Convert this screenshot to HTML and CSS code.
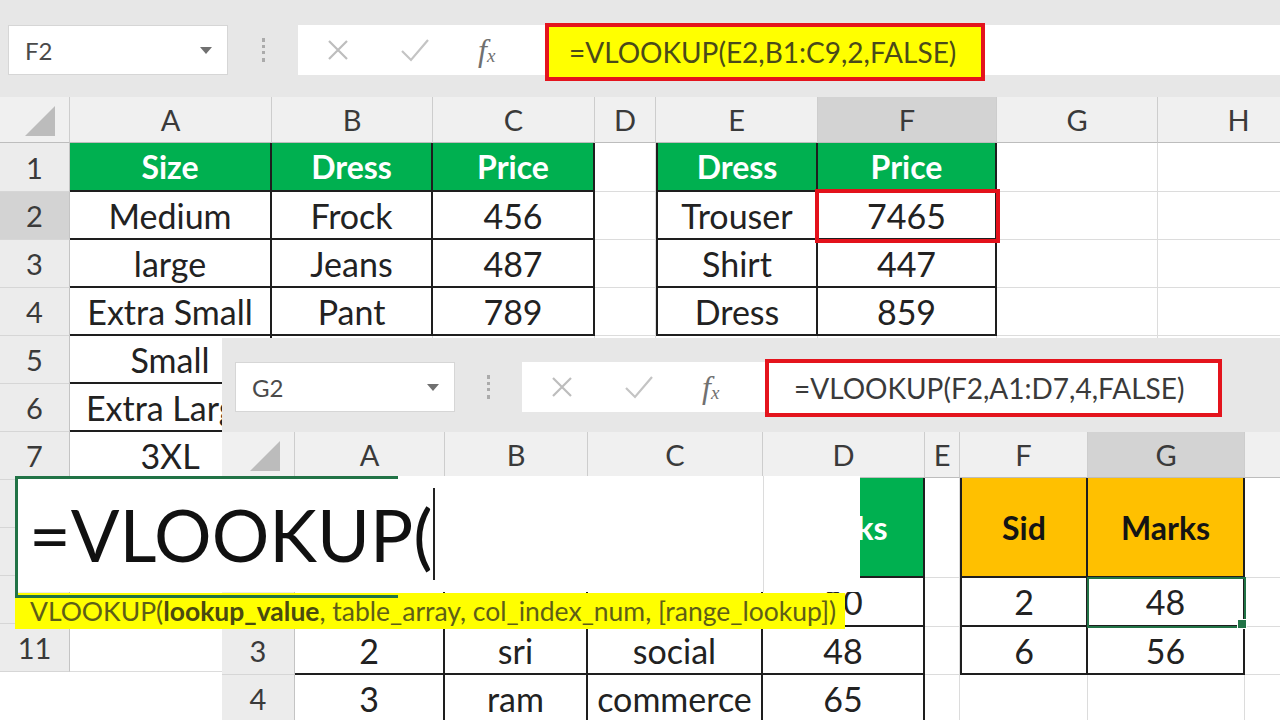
FILE: index.html
```html
<!DOCTYPE html>
<html lang="en">
<head>
    <meta charset="UTF-8">
    <meta name="viewport" content="width=device-width, initial-scale=1.0">
    <title>VLOOKUP</title>
    <link rel="stylesheet" href="styles.css">
</head>
<body>
    <!-- first workbook: size / dress / price lookup -->
    <section class="win win1">
        <div class="fbar fbar1">
            <div class="namebox">F2<span class="drop"></span></div>
            <div class="sep"><span class="dots"></span></div>
            <div class="fxicons">
                <svg class="ic-x" width="24" height="24" viewBox="0 0 24 24"><path d="M3 3L21 21M21 3L3 21" stroke="#bdbdbd" stroke-width="2.2" fill="none"/></svg>
                <svg class="ic-ok" width="30" height="26" viewBox="0 0 30 26"><path d="M2 14L11 23L28 3" stroke="#c4c4c4" stroke-width="2.2" fill="none"/></svg>
                <span class="fx">f<sub>x</sub></span>
            </div>
            <div class="ftext yellow">=VLOOKUP(E2,B1:C9,2,FALSE)</div>
            <div class="frest"></div>
        </div>
        <div class="sheet" id="sheet1"></div>
    </section>

    <!-- second workbook: student marks lookup -->
    <section class="win win2">
        <div class="fbar fbar2">
            <div class="namebox">G2<span class="drop"></span></div>
            <div class="sep"><span class="dots"></span></div>
            <div class="fxicons">
                <svg class="ic-x" width="24" height="24" viewBox="0 0 24 24"><path d="M3 3L21 21M21 3L3 21" stroke="#bdbdbd" stroke-width="2.2" fill="none"/></svg>
                <svg class="ic-ok" width="30" height="26" viewBox="0 0 30 26"><path d="M2 14L11 23L28 3" stroke="#c4c4c4" stroke-width="2.2" fill="none"/></svg>
                <span class="fx">f<sub>x</sub></span>
            </div>
            <div class="ftext">=VLOOKUP(F2,A1:D7,4,FALSE)</div>
        </div>
        <div class="sheet" id="sheet2"></div>
    </section>

    <!-- cell being edited, blown up, with the argument hint -->
    <div class="zoomcell">
        <div class="zedit"><span class="ztext">=VLOOKUP(</span><span class="caret"></span></div>
        <div class="ztip">VLOOKUP(<b>lookup_value</b>, table_array, col_index_num, [range_lookup])</div>
    </div>

    <script>
        var corner = '<svg width="30" height="30" viewBox="0 0 30 30"><path d="M30 0V30H0Z" fill="#bcbcbc"/></svg>';

        // cols/rows: track sizes, header first. colLabels/rowLabels: header texts
        // (blank where the header sits under another window)
        function buildSheet(id, cols, rows, colLabels, rowLabels, cells, selCol, selRow) {
            var sheet = document.getElementById(id);
            var letters = "ABCDEFGHIJ";
            sheet.style.gridTemplateColumns = cols.map(function (w) { return w + "px"; }).join(" ");
            sheet.style.gridTemplateRows = rows.map(function (h) { return h + "px"; }).join(" ");

            var c, r, div;
            div = document.createElement("div");
            div.className = "colhd corner";
            div.innerHTML = corner;
            sheet.appendChild(div);
            for (c = 1; c < cols.length; c++) {
                div = document.createElement("div");
                div.className = "colhd" + (letters[c - 1] == selCol ? " hi" : "");
                div.textContent = colLabels[c - 1] || "";
                sheet.appendChild(div);
            }
            for (r = 1; r < rows.length; r++) {
                div = document.createElement("div");
                div.className = "rowhd" + (r == selRow ? " hi" : "");
                div.textContent = rowLabels[r - 1] || "";
                sheet.appendChild(div);
                for (c = 1; c < cols.length; c++) {
                    var item = cells[letters[c - 1] + r];
                    div = document.createElement("div");
                    div.className = "cell" + (item ? " " + item[1] : "");
                    div.textContent = item ? item[0] : "";
                    sheet.appendChild(div);
                }
            }
        }

        buildSheet("sheet1",
            [70, 202, 161, 162, 61, 162, 179, 161, 162],
            [46, 49, 48, 48, 48, 48, 48, 48, 48, 48, 48, 48],
            ["A", "B", "C", "D", "E", "F", "G", "H"],
            ["1", "2", "3", "4", "5", "6", "7", "", "", "", "11"],
            {
                A1: ["Size", "hd bx"], B1: ["Dress", "hd bx"], C1: ["Price", "hd bx"],
                A2: ["Medium", "bx"], B2: ["Frock", "bx"], C2: ["456", "bx"],
                A3: ["large", "bx"], B3: ["Jeans", "bx"], C3: ["487", "bx"],
                A4: ["Extra Small", "bx"], B4: ["Pant", "bx"], C4: ["789", "bx"],
                A5: ["Small", "bx"], A6: ["Extra Large", "bx"], A7: ["3XL", "bx"],
                E1: ["Dress", "hd bx bl"], F1: ["Price", "hd bx"],
                E2: ["Trouser", "bx bl"], F2: ["7465", "bx selr"],
                E3: ["Shirt", "bx bl"], F3: ["447", "bx"],
                E4: ["Dress", "bx bl"], F4: ["859", "bx"]
            }, "F", 2);

        buildSheet("sheet2",
            [73, 150, 143, 175, 162, 35, 128, 157, 160],
            [46, 100, 49, 48, 48],
            ["A", "B", "C", "D", "E", "F", "G", ""],
            ["", "", "3", "4"],
            {
                A1: ["", "hd bx"], B1: ["", "hd bx"], C1: ["", "hd bx"], D1: ["Marks", "hd bx"],
                A2: ["", "bx"], B2: ["", "bx"], C2: ["", "bx"], D2: ["90", "bx"],
                A3: ["2", "bx"], B3: ["sri", "bx"], C3: ["social", "bx"], D3: ["48", "bx"],
                A4: ["3", "bx"], B4: ["ram", "bx"], C4: ["commerce", "bx"], D4: ["65", "bx"],
                F1: ["Sid", "or bx bl"], G1: ["Marks", "or bx"],
                F2: ["2", "bx bl"], G2: ["48", "bx selg"],
                F3: ["6", "bx bl"], G3: ["56", "bx"]
            }, "G", 0);
    </script>
</body>
</html>
```

FILE: styles.css
```css
*{
    box-sizing: border-box;
}
body{
    margin: 0;
    width: 1280px;
    height: 720px;
    overflow: hidden;
    position: relative;
    background: #fff;
    font-family: Lato, 'Open Sans', sans-serif;
    color: #262626;
}

/* workbook windows */
.win{
    background: #e7e7e7;
    overflow: hidden;
}
.win1{
    width: 1280px;
}
.win2{
    position: absolute;
    left: 222px;
    top: 338px;
    right: 0;
    bottom: 0;
}

/* formula bar */
.fbar{
    display: flex;
    align-items: flex-start;
}
.fbar1{
    height: 97px;
    padding: 25px 0 0 8px;
}
.fbar2{
    height: 94px;
    padding: 24px 0 0 13px;
}
.namebox{
    width: 220px;
    height: 50px;
    background: #fff;
    border: 1px solid #d6d6d6;
    display: flex;
    align-items: center;
    justify-content: space-between;
    padding: 0 15px 0 16px;
    font-size: 24px;
    color: #4a4a4a;
}
.drop{
    border-left: 6px solid transparent;
    border-right: 6px solid transparent;
    border-top: 7px solid #707070;
}
.sep{
    width: 70px;
    height: 50px;
    display: flex;
    align-items: center;
    justify-content: center;
}
.fbar2 .sep{
    width: 67px;
}
.dots{
    height: 24px;
    border-left: 3px dotted #ababab;
}
.fxicons{
    width: 247px;
    height: 50px;
    background: #fff;
    display: flex;
    align-items: center;
    padding-left: 28px;
}
.fbar2 .fxicons{
    width: 243px;
}
.ic-ok{
    margin-left: 50px;
}
.fx{
    margin-left: 48px;
    font-family: 'Liberation Serif', serif;
    font-style: italic;
    font-size: 32px;
    line-height: 1;
    color: #707070;
}
.fx sub{
    font-size: 19px;
    vertical-align: -1px;
}
.ftext{
    width: 457px;
    height: 58px;
    margin-top: -3px;
    border: 4px solid #e4141d;
    background: #fff;
    display: flex;
    align-items: center;
    padding-left: 25px;
    font-size: 28px;
    color: #3a3a3a;
    white-space: nowrap;
    overflow: hidden;
}
.ftext.yellow{
    width: 440px;
    margin-top: -2px;
    background: #ffff00;
    padding-left: 20px;
    color: #4a4a1a;
}
.frest{
    flex: 1;
    height: 50px;
    background: #fff;
}

/* grid */
.sheet{
    display: grid;
}
.colhd, .rowhd, .cell{
    display: flex;
    align-items: center;
    justify-content: center;
    white-space: nowrap;
    overflow: hidden;
}
.colhd{
    background: #f0f0f0;
    border-right: 1px solid #cdcdcd;
    border-bottom: 1px solid #bdbdbd;
    font-size: 29px;
    color: #3a3a3a;
}
.corner{
    justify-content: flex-end;
    align-items: flex-end;
    padding: 0 14px 6px 0;
}
.rowhd{
    background: #ececec;
    border-right: 1px solid #c4c4c4;
    border-bottom: 1px solid #d6d6d6;
    font-size: 29px;
    color: #3a3a3a;
}
.hi{
    background: #d3d3d3;
}
.cell{
    background: #fff;
    border-right: 1px solid #dcdcdc;
    border-bottom: 1px solid #dcdcdc;
    font-size: 34px;
    color: #222;
}
.bx{
    border-right: 2px solid #1e1e1e;
    border-bottom: 2px solid #1e1e1e;
}
.bl{
    border-left: 2px solid #1e1e1e;
}
.hd{
    background: #00b050;
    color: #fff;
    font-size: 32px;
    font-weight: 700;
}
.or{
    background: #ffc000;
    color: #141414;
    font-size: 32px;
    font-weight: 700;
}
.selr{
    position: relative;
    z-index: 1;
    overflow: visible;
    outline: 4px solid #e3111b;
    outline-offset: -1px;
}
.selg{
    position: relative;
    z-index: 1;
    overflow: visible;
    outline: 2px solid #217346;
    outline-offset: -1px;
}
.selg::after{
    content: "";
    position: absolute;
    right: -4px;
    bottom: -4px;
    width: 8px;
    height: 8px;
    background: #217346;
    border: 1px solid #fff;
}

/* enlarged edit cell */
.zoomcell{
    position: absolute;
    z-index: 2;
    left: 15px;
    top: 476px;
    width: 845px;
}
.zedit{
    position: relative;
    height: 116px;
    background: #fff;
    display: flex;
    align-items: center;
}
.zedit::before{
    content: "";
    position: absolute;
    left: 0;
    top: 0;
    width: 380px;
    height: 100%;
    border: 3px solid #217346;
    border-right: 0;
}
.zedit::after{
    content: "";
    position: absolute;
    left: 748px;
    top: 0;
    bottom: 0;
    width: 1px;
    background: #dcdcdc;
}
.ztext{
    padding-left: 14px;
    font-size: 72px;
    line-height: 1;
    color: #111;
}
.caret{
    width: 2px;
    height: 92px;
    margin-left: 1px;
    background: #222;
}
.ztip{
    width: 830px;
    height: 36px;
    margin-top: 1px;
    background: #ffff00;
    display: flex;
    align-items: center;
    padding-left: 15px;
    font-size: 26.5px;
    color: #5e5e18;
    white-space: nowrap;
    overflow: hidden;
}
.ztip b{
    color: #4a4a10;
}
```
